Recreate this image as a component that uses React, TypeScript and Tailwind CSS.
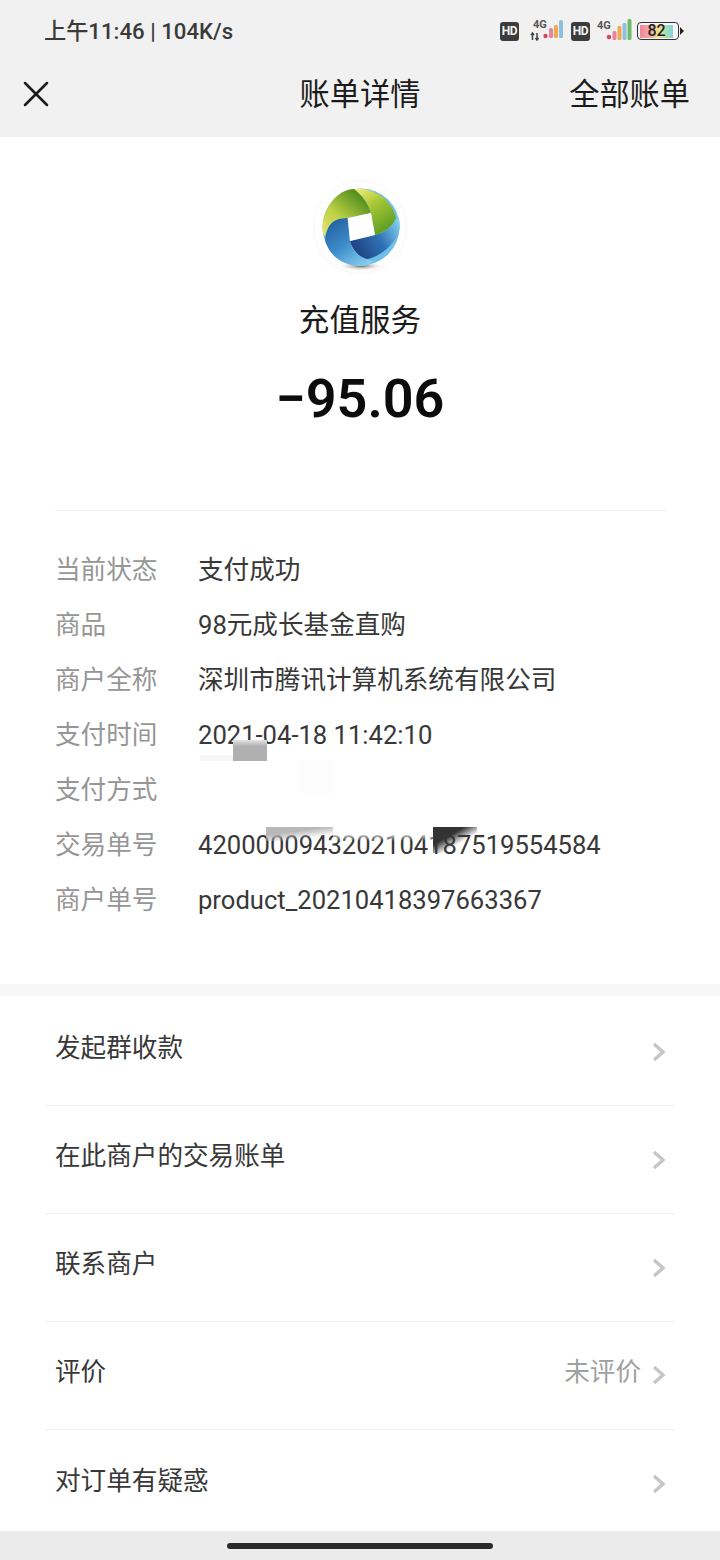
import { X } from 'lucide-react';

const details = [
  ['当前状态', '支付成功'],
  ['商品', '98元成长基金直购'],
  ['商户全称', '深圳市腾讯计算机系统有限公司'],
  ['支付时间', '2021-04-18 11:42:10'],
  ['支付方式', ''],
  ['交易单号', '4200000943202104187519554584'],
  ['商户单号', 'product_20210418397663367'],
];

const actions = [
  { label: '发起群收款' },
  { label: '在此商户的交易账单' },
  { label: '联系商户' },
  { label: '评价', value: '未评价' },
  { label: '对订单有疑惑' },
];

function HdBadge() {
  return (
    <span className="flex h-[19px] w-[19px] items-center justify-center rounded-[3px] bg-[#3c3c3c] text-[12px] font-bold tracking-[-0.3px] text-[#f4f4f4]">
      HD
    </span>
  );
}

function StatusIcons() {
  return (
    <div className="flex items-center">
      <HdBadge />
      <div className="relative ml-[11px] h-[24px] w-[34px]">
        <svg className="absolute inset-0" width="34" height="24" viewBox="0 0 34 24">
          <path d="M7 14v7M5.5 19l1.5 2 1.5-2M2.5 21v-7M1 16l1.5-2 1.5 2" stroke="#444" strokeWidth="1.5" fill="none" />
          <circle cx="15.5" cy="17" r="2.2" fill="#d9455f" />
          <rect x="19" y="9" width="4" height="10" rx="1.5" fill="#e8839b" />
          <rect x="24" y="6" width="4" height="13" rx="1.5" fill="#f0a94e" />
          <rect x="29" y="1" width="4" height="18" rx="1.5" fill="#8fbfe0" />
        </svg>
        <span className="absolute left-[3px] top-[0px] text-[11px] font-bold leading-[11px] text-[#555]">4G</span>
      </div>
      <div className="ml-[7px]">
        <HdBadge />
      </div>
      <div className="relative ml-[6px] h-[24px] w-[36px]">
        <svg className="absolute inset-0" width="36" height="24" viewBox="0 0 36 24">
          <circle cx="13" cy="18" r="2.3" fill="#d9455f" />
          <rect x="16.5" y="12" width="4" height="9" rx="1.5" fill="#e8839b" />
          <rect x="21.5" y="7" width="4" height="14" rx="1.5" fill="#f0a94e" />
          <rect x="26.5" y="4" width="4" height="17" rx="1.5" fill="#8fbfe0" />
          <rect x="31.5" y="0" width="4" height="21" rx="1.5" fill="#6fbb6a" />
        </svg>
        <span className="absolute left-[1px] top-[1px] text-[11px] font-bold leading-[11px] text-[#555]">4G</span>
      </div>
      <div className="ml-[5px] flex h-[18px] w-[42px] items-center rounded-[4px] border border-[#333] bg-[#f6f6f6] px-[2px]">
        <div className="flex h-[13px] w-[33px] items-center justify-center bg-[linear-gradient(90deg,#ef8798_0%,#f3a9a6_30%,#f2e08e_55%,#a9dfae_78%,#82d3e2_100%)]">
          <span className="text-[16px] font-medium leading-none text-[#222]">82</span>
        </div>
      </div>
      <span className="ml-[1px] h-0 w-0 border-y-[4px] border-l-[4px] border-y-transparent border-l-[#222]" />
    </div>
  );
}

function Logo() {
  return (
    <div className="flex h-[94px] w-[94px] items-center justify-center rounded-full border border-[#f6f6ef] bg-white">
      <svg className="ml-[1px] overflow-visible" width="78" height="78" viewBox="0 0 78 78">
        <defs>
          <linearGradient id="lg1" x1="0" y1="1" x2="0.8" y2="0.1">
            <stop offset="0" stopColor="#ece86a" />
            <stop offset="0.45" stopColor="#bcd044" />
            <stop offset="1" stopColor="#4a8a1c" />
          </linearGradient>
          <linearGradient id="lg2" x1="0.1" y1="0" x2="0.7" y2="1">
            <stop offset="0" stopColor="#f2ea72" />
            <stop offset="0.4" stopColor="#a8c836" />
            <stop offset="1" stopColor="#5a9a22" />
          </linearGradient>
          <linearGradient id="lb1" x1="0.1" y1="0" x2="0.8" y2="1">
            <stop offset="0" stopColor="#215c9c" />
            <stop offset="0.5" stopColor="#3c8aca" />
            <stop offset="1" stopColor="#86cfee" />
          </linearGradient>
          <linearGradient id="lb2" x1="0" y1="0.7" x2="1" y2="0.2">
            <stop offset="0" stopColor="#1d3f80" />
            <stop offset="0.55" stopColor="#2f72b6" />
            <stop offset="1" stopColor="#7fcdec" />
          </linearGradient>
          <radialGradient id="logoShadow">
            <stop offset="0" stopColor="#666" />
            <stop offset="1" stopColor="#fff" stopOpacity="0" />
          </radialGradient>
        </defs>
        <ellipse cx="39" cy="78" rx="24" ry="5" fill="url(#logoShadow)" />
        <circle cx="39" cy="39" r="38.5" fill="#6fc0e6" />
        <path d="M3 52C6 32 14 30 25.7 30L28 53C31 66 38 72 52 73 46 77 42 78 39 78 21 78 7 68 3 52Z" fill="url(#lb1)" />
        <path d="M28 53L53 47C62 45 70 40 76 28 78 33 78 36 77.5 42 72 58 58 68 46 71 38 70 31 63 28 53Z" fill="url(#lb2)" />
        <path d="M0.5 42C0 20 16 1 32 1 40 7 46 15 49 25L25.7 30C14 30 6 34 3 48 1 46 1 44 0.5 42Z" fill="url(#lg1)" />
        <path d="M32 1C52-1 70 12 74 30 70 39 62 45 53 47L49 25C46 15 40 7 32 1Z" fill="url(#lg2)" />
        <path d="M25.7 30L49 25 53 47 28 53Z" fill="#fff" />
      </svg>
    </div>
  );
}

export default function App() {
  return (
    <div className="relative flex h-[1560px] w-[720px] flex-col overflow-hidden bg-white font-['Roboto','Noto_Sans_CJK_SC',sans-serif] text-[#1b1b1b]">
      {/* Status bar + nav */}
      <header className="h-[137px] shrink-0 bg-[#f1f1f1]">
        <div className="flex h-[62px] items-center justify-between pl-[44px] pr-[36px]">
          <span className="mt-[2px] text-[22.2px] font-medium text-[#3a3a3a]">上午11:46 | 104K/s</span>
          <StatusIcons />
        </div>
        <div className="relative flex h-[64px] items-center justify-between pl-[14px] pr-[30px]">
          <X size={44} strokeWidth={1.4} className="text-[#1c1c1c]" />
          <span className="absolute left-0 right-0 mt-[2px] text-center text-[30.2px]">账单详情</span>
          <span className="mt-[2px] text-[30.2px]">全部账单</span>
        </div>
      </header>

      {/* Amount */}
      <section className="flex flex-col items-center pt-[43px]">
        <Logo />
        <p className="mt-[25px] text-[30.6px] leading-[44px]">充值服务</p>
        <p className="mt-[21px] text-[54px] font-semibold leading-[70px] text-[#0c0c0c]">−95.06</p>
      </section>

      {/* Details */}
      <section className="relative ml-[55px] mr-[54px] mt-[76px] flex h-[474px] flex-col border-t border-[#efefef] pt-[32px]">
        {details.map(([label, value]) => (
          <div key={label} className="flex h-[55px] items-center text-[25.6px]">
            <span className="w-[143px] shrink-0 text-[#969696]">{label}</span>
            <span className="text-[#383838]">{value}</span>
          </div>
        ))}
        {/* mosaic patches */}
        <div className="absolute left-[178px] top-[229px] h-[21px] w-[34px] bg-[linear-gradient(180deg,#e4e4e4_0%,#b0b0b0_30%,#b0b0b0_100%)]" />
        <div className="absolute left-[145px] top-[244px] h-[6px] w-[33px] bg-[#f7f7f7]" />
        <div className="absolute left-[245px] top-[249px] h-[33px] w-[33px] bg-[#fcfcfc]" />
        <div className="absolute left-[211px] top-[316px] h-[14px] w-[67px] bg-[linear-gradient(172deg,#b8b8b8_0%,#b8b8b8_35%,transparent_75%)]" />
        <div className="absolute left-[278px] top-[316px] h-[14px] w-[100px] bg-[linear-gradient(180deg,#ffffff_40%,transparent_100%)]" />
        <div className="absolute left-[378px] top-[316px] h-[26px] w-[44px] bg-[linear-gradient(150deg,#333_35%,transparent_62%)]" />
      </section>

      <div className="h-[12px] shrink-0 bg-[#f7f7f7]" />

      {/* Action list */}
      <section className="min-h-0 flex-1 overflow-hidden pt-[2px]">
        {actions.map((item, i) => (
          <div
            key={item.label}
            className={`mx-[45px] flex h-[108px] items-center justify-between pl-[10px] ${i < actions.length - 1 ? 'border-b border-[#f0f0f0]' : ''}`}
          >
            <span className="mt-[-6px] text-[25.6px] text-[#383838]">{item.label}</span>
            <div className="flex items-center">
              {item.value && <span className="mr-[11px] mt-[-6px] text-[25.6px] text-[#a0a0a0]">{item.value}</span>}
              <svg className="mr-[9px]" width="14" height="20" viewBox="0 0 14 20" fill="none" stroke="#c6c6c6" strokeWidth="3.4">
                <path d="M2 2l9 8-9 8" />
              </svg>
            </div>
          </div>
        ))}
      </section>

      {/* Home indicator */}
      <div className="flex h-[29px] shrink-0 items-center justify-center bg-[#ebebeb]">
        <div className="h-[6px] w-[266px] rounded-full bg-[#2b2b2b]" />
      </div>
    </div>
  );
}
